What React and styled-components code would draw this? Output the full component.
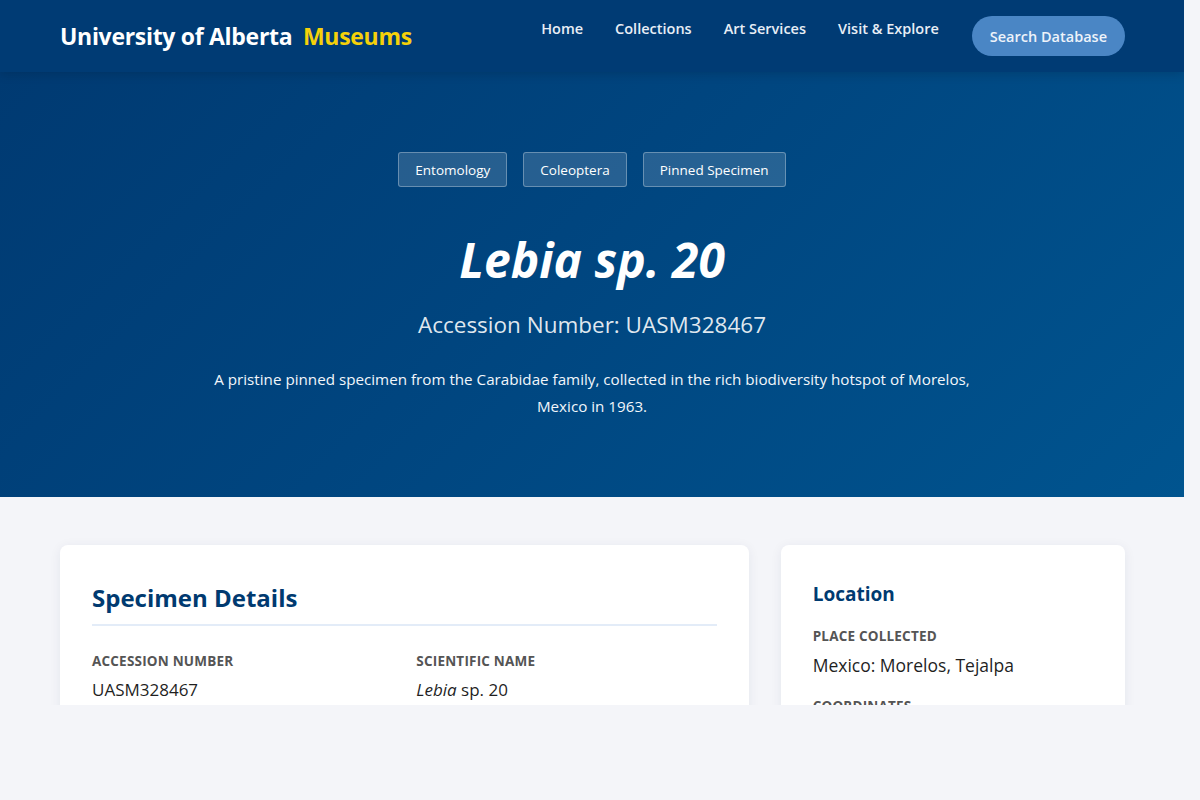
import React from 'react';
import styled, { createGlobalStyle } from "styled-components"

const GlobalStyle = createGlobalStyle`
    body {
        margin: 0;
        background: #f4f5f9;
        font-family: "Open Sans", "Noto Sans", sans-serif;
    }
`

const tags = ["Entomology", "Coleoptera", "Pinned Specimen"];
const navLinks = ["Home", "Collections", "Art Services", "Visit & Explore"];

const App = () => {
    return (
        <Page>
            <GlobalStyle />
            <Header>
                <HeaderInner>
                    <Logo>
                        University of Alberta <Gold>Museums</Gold>
                    </Logo>
                    <Nav>
                        {navLinks.map(link => <NavLink key={link} href="#">{link}</NavLink>)}
                        <SearchButton>Search Database</SearchButton>
                    </Nav>
                </HeaderInner>
            </Header>
            <Hero>
                <HeroInner>
                    <TagRow>
                        {tags.map(tag => <Tag key={tag}>{tag}</Tag>)}
                    </TagRow>
                    <Title>Lebia sp. 20</Title>
                    <Subtitle>Accession Number: UASM328467</Subtitle>
                    <Description>
                        A pristine pinned specimen from the Carabidae family, collected in the rich biodiversity hotspot of Morelos, Mexico in 1963.
                    </Description>
                </HeroInner>
            </Hero>
            <Main>
                <Card>
                    <CardTitle>Specimen Details</CardTitle>
                    <FieldGrid>
                        <Field>
                            <Label>Accession Number</Label>
                            <Value>UASM328467</Value>
                        </Field>
                        <Field>
                            <Label>Scientific Name</Label>
                            <Value><em>Lebia</em> sp. 20</Value>
                        </Field>
                    </FieldGrid>
                </Card>
                <Card>
                    <SideTitle>Location</SideTitle>
                    <Field>
                        <Label>Place Collected</Label>
                        <Value large>Mexico: Morelos, Tejalpa</Value>
                    </Field>
                    <Field>
                        <Label>Coordinates</Label>
                        <Value large>18.9&deg; N, 99.17&deg; W</Value>
                    </Field>
                </Card>
            </Main>
        </Page>
    )
}

const Page = styled.div`
    width: 1184px;
    height: 705px;
    overflow: hidden;
    background: #f4f5f9;
`

const Header = styled.header`
    position: relative;
    z-index: 2;
    height: 72px;
    background: #003b74;
    box-shadow: 0 2px 10px rgba(0, 0, 0, 0.15);
`

const HeaderInner = styled.div`
    height: 100%;
    padding: 0 59px 0 60px;
    display: flex;
    align-items: center;
    justify-content: space-between;
`

const Logo = styled.div`
    color: #ffffff;
    font-size: 23px;
    font-weight: 700;
    letter-spacing: -0.3px;
    white-space: nowrap;
`

const Gold = styled.span`
    color: #f5d10a;
    margin-left: 5px;
`

const Nav = styled.nav`
    display: flex;
    align-items: center;
    gap: 32px;
`

const NavLink = styled.a`
    color: #e8eef6;
    text-decoration: none;
    font-size: 14.5px;
    font-weight: 600;
    margin-top: -16px;
`

const SearchButton = styled.button`
    height: 40px;
    padding: 0 18px;
    margin-left: 1px;
    border: none;
    border-radius: 20px;
    background: #4a86c5;
    color: #eef3fa;
    font-family: inherit;
    font-size: 14.5px;
    font-weight: 600;
`

const Hero = styled.section`
    height: 425px;
    background: linear-gradient(135deg, #003a72 0%, #00457f 45%, #00548f 100%);
    color: #ffffff;
`

const HeroInner = styled.div`
    padding: 80px 60px 0;
    display: flex;
    flex-direction: column;
    align-items: center;
    text-align: center;
`

const TagRow = styled.div`
    display: flex;
    gap: 16px;
`

const Tag = styled.span`
    height: 33px;
    padding: 0 16px;
    display: flex;
    align-items: center;
    border: 1px solid rgba(255, 255, 255, 0.3);
    border-radius: 3px;
    background: rgba(255, 255, 255, 0.15);
    font-size: 13.5px;
`

const Title = styled.h1`
    margin: 44px 0 0;
    font-size: 48px;
    font-style: italic;
    font-weight: 700;
    line-height: 1.2;
`

const Subtitle = styled.p`
    margin: 20px 0 0;
    font-size: 22.5px;
    color: rgba(255, 255, 255, 0.88);
`

const Description = styled.p`
    margin: 26px 0 0;
    max-width: 790px;
    font-size: 15.2px;
    line-height: 27px;
    color: #f2f6fb;
`

const Main = styled.main`
    padding: 48px 59px 0 60px;
    display: grid;
    grid-template-columns: 2fr 1fr;
    gap: 32px;
    align-items: start;
`

const Card = styled.div`
    background: #ffffff;
    border-radius: 8px;
    box-shadow: 0 2px 12px rgba(0, 40, 90, 0.07);
    padding: 36px 32px 32px;
    min-height: 300px;
`

const CardTitle = styled.h2`
    margin: 0 0 26px;
    padding-bottom: 10px;
    border-bottom: 2px solid #e3ecf8;
    color: #003a70;
    font-size: 24px;
    font-weight: 700;
`

const SideTitle = styled.h3`
    margin: 0 0 20px;
    color: #003a70;
    font-size: 19px;
    font-weight: 700;
`

const FieldGrid = styled.div`
    display: grid;
    grid-template-columns: 1fr 1fr;
    gap: 24px;
`

const Field = styled.div`
    margin-bottom: 20px;
`

const Label = styled.div`
    color: #555555;
    font-size: 13.5px;
    font-weight: 700;
    text-transform: uppercase;
    letter-spacing: 0.2px;
    margin-bottom: 8px;
`

const Value = styled.div`
    color: #1f1f1f;
    font-size: ${({ large }) => large ? "17.5px" : "17px"};
`

export default App
